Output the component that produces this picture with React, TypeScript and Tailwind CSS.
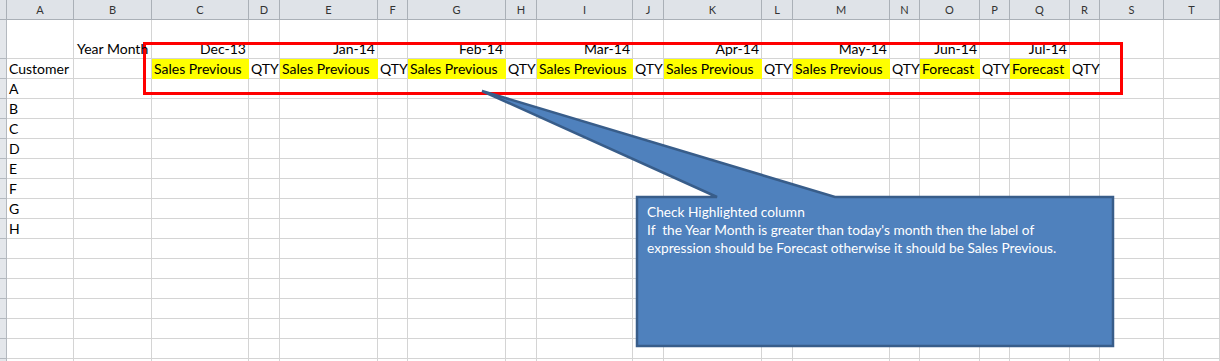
const cols = ['', 'A', 'B', 'C', 'D', 'E', 'F', 'G', 'H', 'I', 'J', 'K', 'L', 'M', 'N', 'O', 'P', 'Q', 'R', 'S', 'T'];

const months: Record<number, string> = {
  3: 'Dec-13',
  5: 'Jan-14',
  7: 'Feb-14',
  9: 'Mar-14',
  11: 'Apr-14',
  13: 'May-14',
  15: 'Jun-14',
  17: 'Jul-14',
};

const labels: Record<number, string> = {
  3: 'Sales Previous',
  5: 'Sales Previous',
  7: 'Sales Previous',
  9: 'Sales Previous',
  11: 'Sales Previous',
  13: 'Sales Previous',
  15: 'Forecast',
  17: 'Forecast',
};

const customers = ['A', 'B', 'C', 'D', 'E', 'F', 'G', 'H'];

const gridCols =
  'grid grid-cols-[7px_67px_78px_97px_31px_98px_30px_98px_31px_96px_31px_98px_31px_97px_30px_60px_30px_60px_30px_64px_1fr]';

const cell = 'border-r border-b border-[#d4d4d4] flex items-end px-[2px] pb-[1px] whitespace-nowrap text-black';

const RowHead = ({ tall }: { tall?: boolean }) => (
  <div className={`${tall ? 'h-[39px]' : 'h-[20px]'} bg-[#e4e7eb] border-r border-b border-[#b4b9bf]`} />
);

const App = () => {
  const rows: string[] = [...customers];
  while (rows.length < 15) rows.push('');

  return (
    <div className="relative w-[1220px] h-[361px] overflow-hidden bg-white font-['Lato',sans-serif] text-[14px] leading-[16px]">
      {/* column headers */}
      <div className={gridCols}>
        {cols.map((c, i) => (
          <div
            key={i}
            className="h-[20px] bg-[#dfe3e8] border-r border-b border-[#aab0b7] flex items-center justify-center text-[11px] text-[#333]"
          >
            {c}
          </div>
        ))}
      </div>

      {/* row 1 */}
      <div className={gridCols}>
        <RowHead tall />
        {cols.slice(1).map((_, j) => {
          const i = j + 1;
          if (i === 2)
            return (
              <div key={i} className={`${cell} h-[39px] overflow-visible`}>
                <span className="relative z-10 pl-[1px]">Year Month</span>
              </div>
            );
          return (
            <div key={i} className={`${cell} h-[39px] justify-end`}>
              {months[i] ?? ''}
            </div>
          );
        })}
      </div>

      {/* row 2 */}
      <div className={gridCols}>
        <RowHead />
        {cols.slice(1).map((_, j) => {
          const i = j + 1;
          if (i === 1)
            return (
              <div key={i} className={`${cell} h-[20px]`}>
                Customer
              </div>
            );
          if (labels[i])
            return (
              <div key={i} className={`${cell} h-[20px] bg-[#ffff00] border-[#ffff00]`}>
                {labels[i]}
              </div>
            );
          const qty = i >= 4 && i <= 18 && i % 2 === 0;
          return (
            <div key={i} className={`${cell} h-[20px]`}>
              {qty ? 'QTY' : ''}
            </div>
          );
        })}
      </div>

      {/* data rows */}
      {rows.map((r, k) => (
        <div key={k} className={gridCols}>
          <RowHead />
          {cols.slice(1).map((_, j) => (
            <div key={j} className={`${cell} h-[20px]`}>
              {j === 0 ? r : ''}
            </div>
          ))}
        </div>
      ))}

      {/* highlight box */}
      <div className="absolute left-[143px] top-[42px] w-[980px] h-[53px] border-[3px] border-[#ff0000]" />

      {/* callout */}
      <svg className="absolute left-0 top-0" width="1220" height="361" viewBox="0 0 1220 361">
        <path
          d="M482 91 L717 197 L637 197 L637 346 L1113 346 L1113 197 L835 197 Z"
          fill="#4f81bd"
          stroke="#385d8a"
          strokeWidth="2.5"
          strokeLinejoin="miter"
        />
      </svg>
      <div className="absolute left-[647px] top-[203px] w-[460px] text-white text-[13.7px] leading-[18px]">
        <div>Check Highlighted column</div>
        <div>If&nbsp; the Year Month is greater than today's month then the label of</div>
        <div>expression should be Forecast otherwise it should be Sales Previous.</div>
      </div>
    </div>
  );
};

export default App;
